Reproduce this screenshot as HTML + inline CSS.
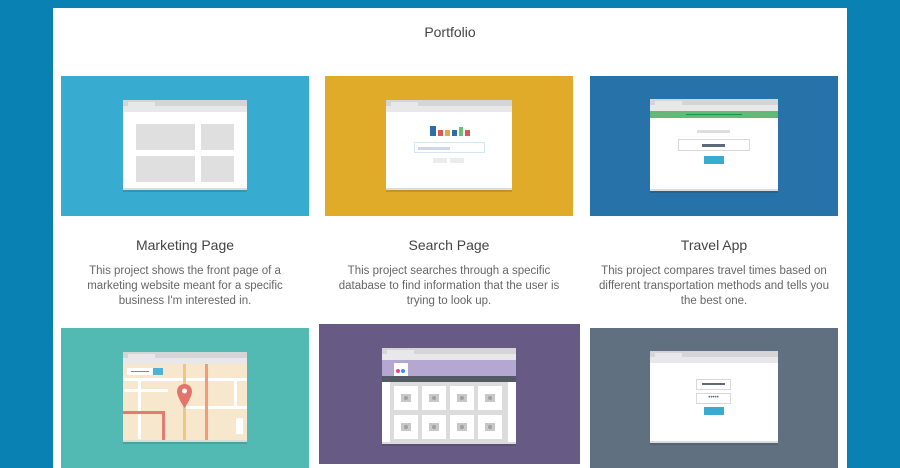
<!DOCTYPE html>
<html><head><meta charset="utf-8"><style>
*{margin:0;padding:0;box-sizing:border-box}
body{width:900px;height:457px;overflow:hidden;background:#0a81b3;font-family:"Liberation Sans",sans-serif;position:relative}
.panel{position:absolute;left:53px;top:8px;width:794px;height:460px;background:#fff}
.a{position:absolute}
.img{position:absolute;overflow:hidden}
.win{position:absolute;background:#fff;box-shadow:0 2px 0 rgba(0,0,0,.12)}
.win .bar{position:absolute;left:0;top:0;right:0;height:6px;background:#d5d5d8}
.win .tab{position:absolute;left:5px;top:2px;width:27px;height:4px;background:#e8e8ea}
.win .bar2{position:absolute;left:0;top:6px;right:0;height:6px;background:#e8e8ea}
.win .bot{position:absolute;left:0;bottom:0;right:0;height:2px;background:#dcdcdf}
.t{position:absolute;width:248px;text-align:center;font-size:14px;color:#444}
.d{position:absolute;left:0;width:248px;text-align:center;font-size:11.5px;color:#666;line-height:15px;white-space:nowrap}
.g{position:absolute;background:#dfdfe0}
</style></head><body>
<div class="panel"></div>
<div class="a" style="left:53px;top:24px;width:794px;text-align:center;font-size:14px;color:#444">Portfolio</div>

<div class="img" style="left:61px;top:76px;width:248px;height:140px;background:#38abd0">
 <div class="win" style="left:62px;top:24px;width:124px;height:90px">
  <div class="bar"></div><div class="tab"></div><div class="bar2"></div><div class="bot"></div>
  <div class="g" style="left:13px;top:24px;width:59px;height:26px"></div>
  <div class="g" style="left:78px;top:24px;width:33px;height:26px"></div>
  <div class="g" style="left:13px;top:56px;width:59px;height:26px"></div>
  <div class="g" style="left:78px;top:56px;width:33px;height:26px"></div>
 </div>
</div>
<div class="t" style="left:61px;top:237px">Marketing Page</div>
<div class="d" style="left:61px;top:264px">This project shows the front page of a<br>marketing website meant for a specific<br>business I'm interested in.</div>

<div class="img" style="left:325px;top:76px;width:248px;height:140px;background:#dfab28">
 <div class="win" style="left:61px;top:24px;width:126px;height:90px">
  <div class="bar"></div><div class="tab"></div><div class="bar2"></div><div class="bot"></div>
  <div class="a" style="left:44px;top:26px;width:6px;height:10px;background:#2a6fa8"></div>
  <div class="a" style="left:52px;top:30px;width:5px;height:6px;background:#e05555"></div>
  <div class="a" style="left:59px;top:30px;width:5px;height:6px;background:#e0ad3a"></div>
  <div class="a" style="left:66px;top:30px;width:5px;height:6px;background:#2a6fa8"></div>
  <div class="a" style="left:73px;top:27px;width:4px;height:9px;background:#6bbf73"></div>
  <div class="a" style="left:79px;top:30px;width:5px;height:6px;background:#e05555"></div>
  <div class="a" style="left:28px;top:42px;width:71px;height:11px;border:1px solid #d6e6f0"></div>
  <div class="a" style="left:32px;top:47px;width:32px;height:3px;background:#cfd6e4"></div>
  <div class="g" style="left:47px;top:58px;width:14px;height:5px;background:#ececec"></div>
  <div class="g" style="left:64px;top:58px;width:14px;height:5px;background:#ececec"></div>
 </div>
</div>
<div class="t" style="left:325px;top:237px">Search Page</div>
<div class="d" style="left:325px;top:264px">This project searches through a specific<br>database to find information that the user is<br>trying to look up.</div>

<div class="img" style="left:590px;top:76px;width:248px;height:140px;background:#2672a9">
 <div class="win" style="left:60px;top:23px;width:128px;height:92px">
  <div class="bar"></div><div class="tab"></div><div class="bar2"></div><div class="bot"></div>
  <div class="a" style="left:0;top:12px;width:128px;height:7px;background:#64b878"></div>
  <div class="a" style="left:36px;top:15px;width:56px;height:1px;background:#0a9a4a"></div>
  <div class="a" style="left:47px;top:31px;width:33px;height:3px;background:#dedede"></div>
  <div class="a" style="left:28px;top:40px;width:72px;height:12px;border:1px solid #d8d8d8"></div>
  <div class="a" style="left:52px;top:45px;width:23px;height:3px;background:#5e6a78"></div>
  <div class="a" style="left:54px;top:57px;width:20px;height:8px;background:#38abd0"></div>
 </div>
</div>
<div class="t" style="left:590px;top:237px">Travel App</div>
<div class="d" style="left:590px;top:264px">This project compares travel times based on<br>different transportation methods and tells you<br>the best one.</div>

<div class="img" style="left:61px;top:328px;width:248px;height:140px;background:#53b9b3">
 <div class="win" style="left:62px;top:24px;width:124px;height:90px;background:#f6e7cd">
  <div class="bar"></div><div class="tab"></div><div class="bar2"></div>
  <div class="a" style="left:0;top:26px;width:124px;height:3px;background:#fff"></div>
  <div class="a" style="left:0;top:37px;width:45px;height:3px;background:#fff"></div>
  <div class="a" style="left:62px;top:54px;width:62px;height:3px;background:#fff"></div>
  <div class="a" style="left:15px;top:27px;width:3px;height:60px;background:#fff"></div>
  <div class="a" style="left:111px;top:27px;width:3px;height:30px;background:#fff"></div>
  <div class="a" style="left:0;top:59px;width:42px;height:3px;background:#e57a70"></div>
  <div class="a" style="left:39px;top:59px;width:3px;height:30px;background:#e57a70"></div>
  <div class="a" style="left:60px;top:12px;width:3px;height:76px;background:#ecc982"></div>
  <div class="a" style="left:82px;top:12px;width:3px;height:76px;background:#f39a78"></div>
  <div class="a" style="left:4px;top:16px;width:26px;height:7px;background:#fff"></div>
  <div class="a" style="left:8px;top:19px;width:18px;height:1px;background:#888"></div>
  <div class="a" style="left:30px;top:16px;width:10px;height:7px;background:#4eb1d6"></div>
  <div class="a" style="left:113px;top:66px;width:7px;height:16px;background:#fff"></div>
  <svg class="a" style="left:54px;top:32px" width="15" height="24" viewBox="0 0 15 24"><path d="M7.5 0C3.3 0 0 3.3 0 7.5 0 13 7.5 24 7.5 24S15 13 15 7.5C15 3.3 11.7 0 7.5 0z" fill="#e4736b"/><circle cx="7.5" cy="7" r="2.5" fill="#fff"/></svg>
  <div class="bot"></div>
 </div>
</div>

<div class="img" style="left:319px;top:324px;width:261px;height:140px;background:#675a84">
 <div class="win" style="left:63px;top:24px;width:134px;height:96px">
  <div class="bar"></div><div class="tab"></div><div class="bar2"></div>
  <div class="a" style="left:0;top:12px;width:134px;height:16px;background:#b5a6d2"></div>
  <div class="a" style="left:12px;top:15px;width:14px;height:14px;background:#fff"></div>
  <div class="a" style="left:14px;top:21px;width:4px;height:4px;border-radius:50%;background:#ef3e8f"></div>
  <div class="a" style="left:19px;top:21px;width:4px;height:4px;border-radius:50%;background:#3e8ff0"></div>
  <div class="a" style="left:0;top:28px;width:134px;height:6px;background:#535a63"></div>
  <div class="a" style="left:8px;top:34px;width:118px;height:60px;background:#dcdcdc"></div>
  <div id="grid"></div>
  <div class="bot"></div>
 </div>
</div>

<div class="img" style="left:590px;top:328px;width:248px;height:140px;background:#617080">
 <div class="win" style="left:60px;top:23px;width:128px;height:92px">
  <div class="bar"></div><div class="tab"></div><div class="bar2"></div><div class="bot"></div>
  <div class="a" style="left:46px;top:28px;width:35px;height:11px;border:1px solid #d8d8d8"></div>
  <div class="a" style="left:52px;top:32px;width:23px;height:2px;background:#5e6a78"></div>
  <div class="a" style="left:46px;top:42px;width:35px;height:11px;border:1px solid #d8d8d8;font-size:6px;line-height:9px;text-align:center;color:#5e6a78">•••••</div>
  <div class="a" style="left:54px;top:56px;width:20px;height:8px;background:#38abd0"></div>
 </div>
</div>
<script>
var g=document.getElementById('grid').parentNode;
for(var r=0;r<2;r++)for(var c=0;c<4;c++){
 var x=12+c*28,y=38+r*29;
 var e=document.createElement('div');e.className='a';
 e.style.cssText='left:'+x+'px;top:'+y+'px;width:24px;height:24px;background:#fff';
 var i=document.createElement('div');i.className='a';
 i.style.cssText='left:7px;top:8px;width:10px;height:8px;background:#c8c8c8';
 var o=document.createElement('div');o.className='a';
 o.style.cssText='left:3px;top:2px;width:4px;height:4px;border-radius:50%;background:#a0a0a0';
 i.appendChild(o);e.appendChild(i);g.appendChild(e);
}
</script>
</body></html>
